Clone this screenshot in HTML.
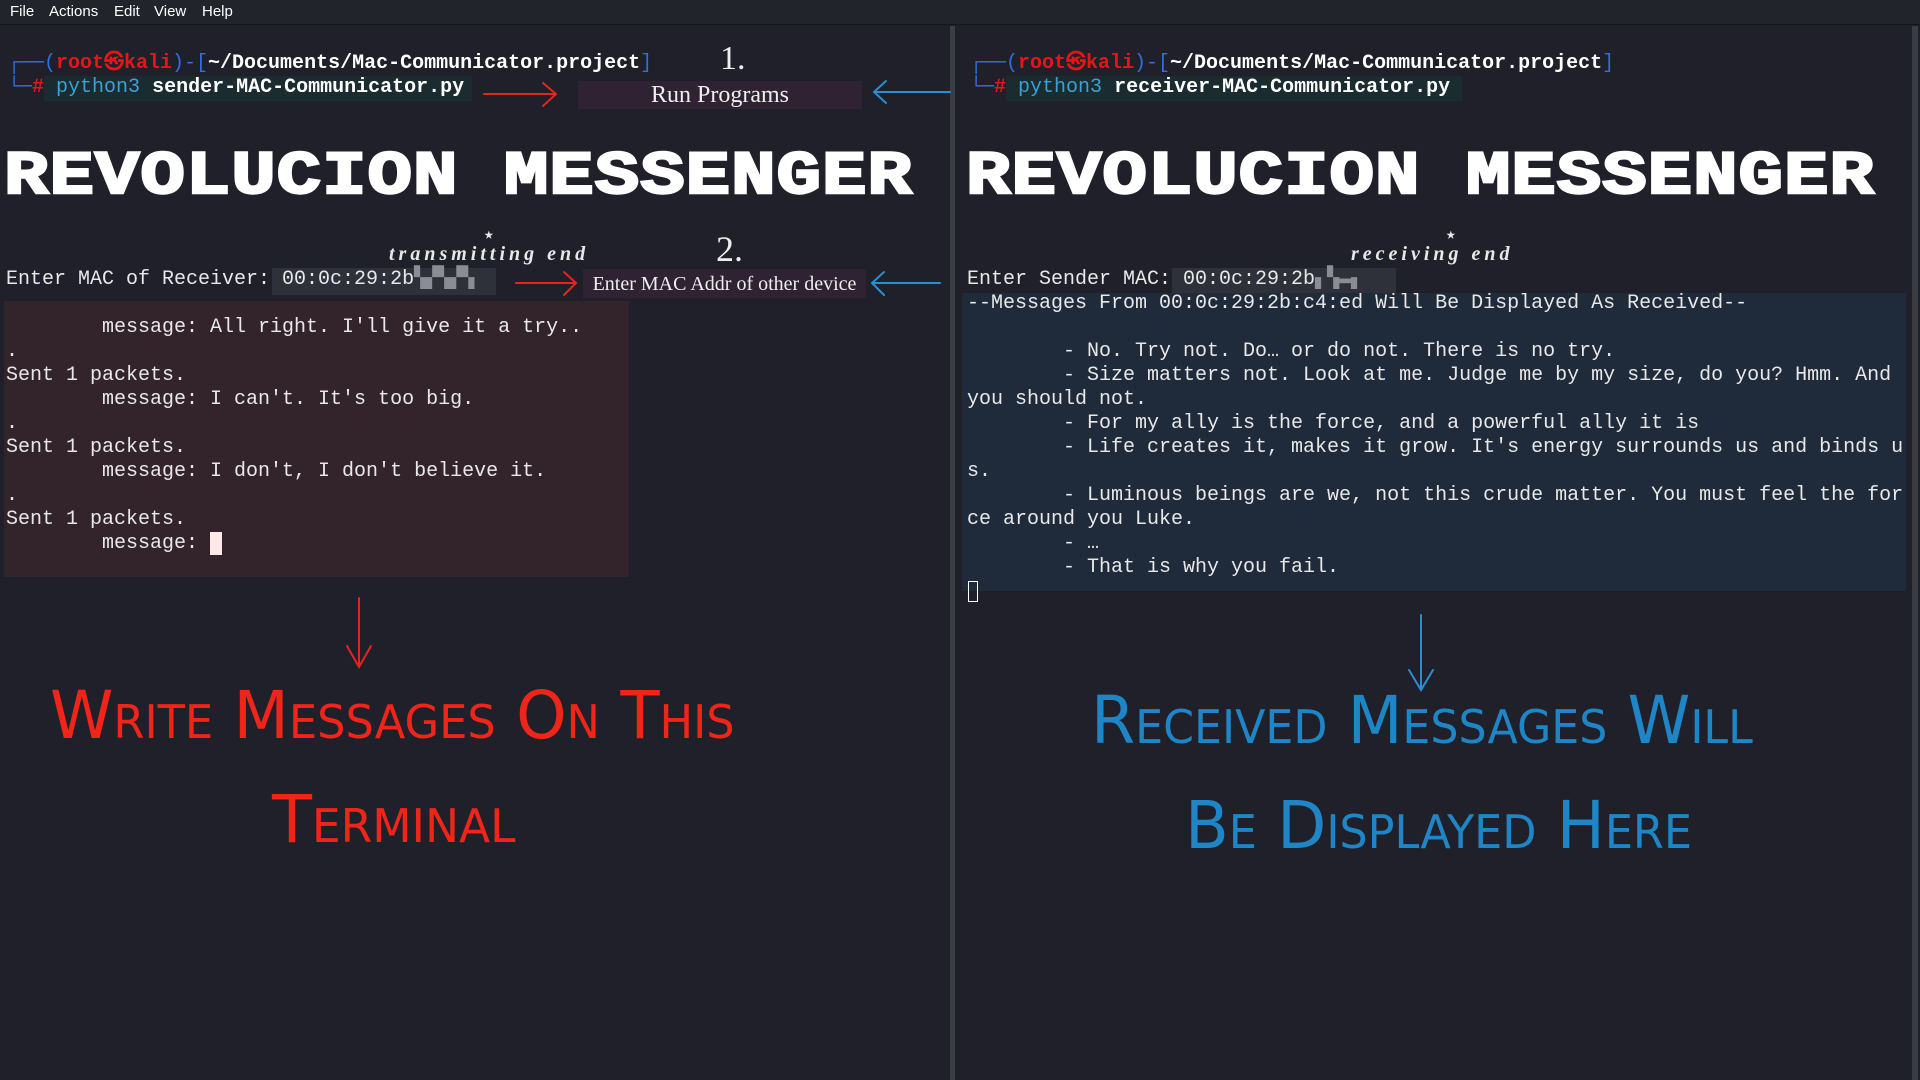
<!DOCTYPE html>
<html><head><meta charset="utf-8"><style>
*{margin:0;padding:0;box-sizing:border-box}
body{width:1920px;height:1080px;background:#1f2029;position:relative;overflow:hidden;font-family:"Liberation Mono","DejaVu Sans Mono",monospace;color:#e8e8e8}
.a{position:absolute;white-space:pre}
.m{font-size:20px;line-height:24px}
#menu{position:absolute;left:0;top:0;width:1920px;height:25px;background:#22242c;border-bottom:1px solid #15161b;font-family:"Liberation Sans",sans-serif;font-size:15px;color:#fff}
#menu span{position:absolute;top:3px}
.title{font-family:"Liberation Mono",monospace;font-weight:bold;font-size:76px;line-height:60px;color:#fff;letter-spacing:1px;transform-origin:0 0;-webkit-text-stroke:3px #fff}
.serif{font-family:"Liberation Serif",serif;color:#eee}
.hand{font-family:"Liberation Sans Narrow","DejaVu Sans Condensed",sans-serif;font-variant:small-caps;font-size:66px;line-height:66px;transform-origin:0 0}
</style></head><body>
<div id="menu"><span style="left:10px">File</span><span style="left:49px">Actions</span><span style="left:114px">Edit</span><span style="left:154px">View</span><span style="left:202px">Help</span></div>
<div style="position:absolute;left:950px;top:26px;width:5px;height:1054px;background:#3b3d44"></div>
<div style="position:absolute;left:1912px;top:26px;width:6px;height:1054px;background:#3b3d44"></div>

<div class="a" style="left:44px;top:76px;width:428px;height:25px;background:#1b2c30"></div>
<div class="a m" style="left:8px;top:52px"><span style="color:#2f6fe0">┌──(</span><span style="color:#e5151a;font-weight:bold">root㉿kali</span><span style="color:#2f6fe0">)-[</span><span style="font-weight:bold;color:#fff">~/Documents/Mac-Communicator.project</span><span style="color:#2f6fe0">]</span></div>
<div class="a m" style="left:8px;top:76px"><span style="color:#2f6fe0">└─</span><span style="color:#e5151a;font-weight:bold">#</span> <span style="color:#3aa0d8">python3</span> <span style="font-weight:bold;color:#fff">sender-MAC-Communicator.py</span></div>
<div class="a" style="left:1006px;top:76px;width:456px;height:25px;background:#1b2c30"></div>
<div class="a m" style="left:970px;top:52px"><span style="color:#2f6fe0">┌──(</span><span style="color:#e5151a;font-weight:bold">root㉿kali</span><span style="color:#2f6fe0">)-[</span><span style="font-weight:bold;color:#fff">~/Documents/Mac-Communicator.project</span><span style="color:#2f6fe0">]</span></div>
<div class="a m" style="left:970px;top:76px"><span style="color:#2f6fe0">└─</span><span style="color:#e5151a;font-weight:bold">#</span> <span style="color:#3aa0d8">python3</span> <span style="font-weight:bold;color:#fff">receiver-MAC-Communicator.py</span></div>

<div class="a serif" style="left:720px;top:40px;font-size:34px">1.</div>
<div class="a serif" style="left:578px;top:81px;width:284px;height:28px;background:#2e2233;font-size:24px;line-height:28px;text-align:center">Run Programs</div>
<div class="a serif" style="left:716px;top:228px;font-size:36px">2.</div>
<div class="a serif" style="left:583px;top:269px;width:283px;height:29px;background:#2e2233;font-size:20px;line-height:30px;text-align:center">Enter MAC Addr of other device</div>
<svg class="a" style="left:0;top:0" width="1920" height="1080">
<g fill="none" stroke-width="2" stroke-linecap="round">
<path d="M484 94H556M543 83L556 94L543 106" stroke="#e5251d"/>
<path d="M950 92H874M886 81L874 92L886 103" stroke="#2a8fd0"/>
<path d="M516 283H576M564 272L576 283L564 295" stroke="#e5251d"/>
<path d="M940 283H872M884 272L872 283L884 295" stroke="#2a8fd0"/>
<path d="M359 598V667M347 646L359 667L371 646" stroke="#e5251d"/>
<path d="M1421 615V690M1409 670L1421 690L1433 670" stroke="#2a8fd0"/>
</g></svg>

<div class="a title" style="left:4px;top:153px;transform:scale(0.975,0.8)">REVOLUCION MESSENGER</div>
<div class="a title" style="left:966px;top:153px;transform:scale(0.975,0.8)">REVOLUCION MESSENGER</div>

<div class="a" style="left:484px;top:224px;font-size:16px">★</div>
<div class="a" style="left:389px;top:243px;font-size:20px;font-weight:bold;font-style:italic;font-family:'Liberation Serif',serif;letter-spacing:4px">transmitting end</div>
<div class="a" style="left:1446px;top:224px;font-size:16px">★</div>
<div class="a" style="left:1351px;top:243px;font-size:20px;font-weight:bold;font-style:italic;font-family:'Liberation Serif',serif;letter-spacing:4px">receiving end</div>

<div class="a" style="left:272px;top:268px;width:224px;height:27px;background:#2e3139"></div>
<div class="a m" style="left:6px;top:268px">Enter MAC of Receiver: 00:0c:29:2b<span style="color:#8a8d93">▚▞▚▞▚</span></div>
<div class="a" style="left:1172px;top:268px;width:224px;height:27px;background:#2e3139"></div>
<div class="a m" style="left:967px;top:268px">Enter Sender MAC: 00:0c:29:2b<span style="color:#8a8d93">▖▚▬▖</span></div>

<div class="a" style="left:4px;top:301px;width:625px;height:276px;background:#33232a"></div>
<div class="a m" style="left:6px;top:316px">        message: All right. I'll give it a try..
.
Sent 1 packets.
        message: I can't. It's too big.
.
Sent 1 packets.
        message: I don't, I don't believe it.
.
Sent 1 packets.
        message: <span style="background:#ffe8e8">&nbsp;</span></div>

<div class="a" style="left:962px;top:293px;width:944px;height:298px;background:#1f2a3a"></div>
<div class="a m" style="left:967px;top:292px">--Messages From 00:0c:29:2b:c4:ed Will Be Displayed As Received--

        - No. Try not. Do… or do not. There is no try.
        - Size matters not. Look at me. Judge me by my size, do you? Hmm. And
you should not.
        - For my ally is the force, and a powerful ally it is
        - Life creates it, makes it grow. It's energy surrounds us and binds u
s.
        - Luminous beings are we, not this crude matter. You must feel the for
ce around you Luke.
        - …
        - That is why you fail.
<span style="outline:1px solid #fff;outline-offset:-2px">&nbsp;</span></div>

<div class="a hand" style="left:50px;top:683px;color:#f0251a;transform:scaleX(1.08)">Write Messages On This</div>
<div class="a hand" style="left:272px;top:787px;color:#f0251a;transform:scaleX(1.1)">Terminal</div>
<div class="a hand" style="left:1091px;top:688px;color:#1e86c6;transform:scaleX(1.07)">Received Messages Will</div>
<div class="a hand" style="left:1185px;top:793px;color:#1e86c6;transform:scaleX(1.075)">Be Displayed Here</div>
</body></html>
